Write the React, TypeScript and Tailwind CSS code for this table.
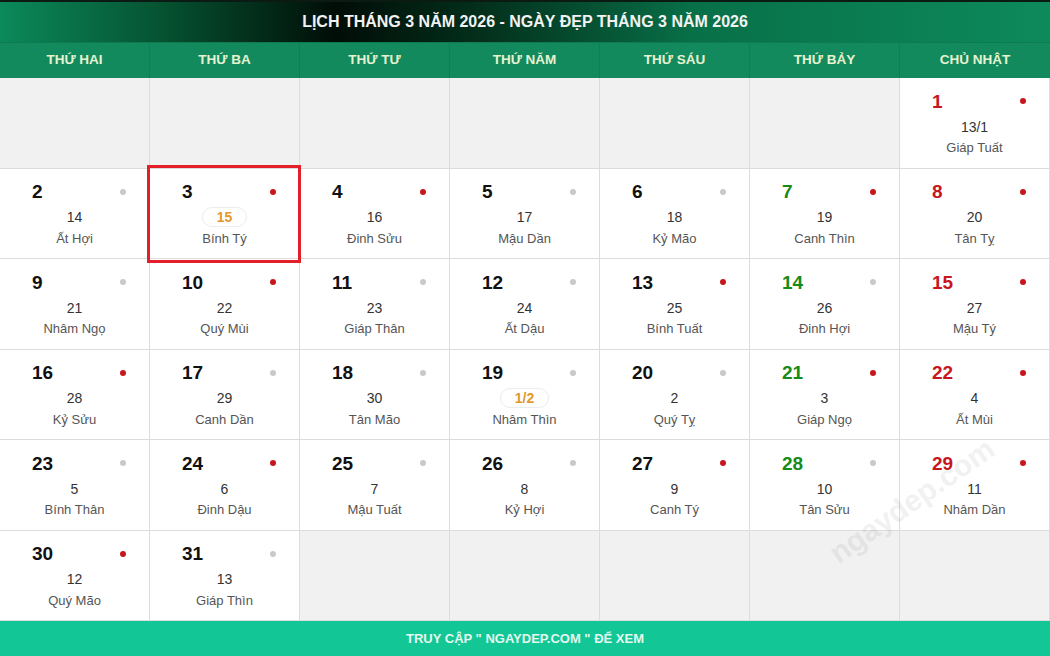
import React from 'react';

type Day = {
  day: number;
  lunar: string;
  canChi: string;
  good: boolean;
  badge?: boolean;
  boxed?: boolean;
};

const weekdays = ['THỨ HAI', 'THỨ BA', 'THỨ TƯ', 'THỨ NĂM', 'THỨ SÁU', 'THỨ BẢY', 'CHỦ NHẬT'];

const days: Day[] = [
  { day: 1, lunar: '13/1', canChi: 'Giáp Tuất', good: true },
  { day: 2, lunar: '14', canChi: 'Ất Hợi', good: false },
  { day: 3, lunar: '15', canChi: 'Bính Tý', good: true, badge: true, boxed: true },
  { day: 4, lunar: '16', canChi: 'Đinh Sửu', good: true },
  { day: 5, lunar: '17', canChi: 'Mậu Dần', good: false },
  { day: 6, lunar: '18', canChi: 'Kỷ Mão', good: false },
  { day: 7, lunar: '19', canChi: 'Canh Thìn', good: true },
  { day: 8, lunar: '20', canChi: 'Tân Tỵ', good: true },
  { day: 9, lunar: '21', canChi: 'Nhâm Ngọ', good: false },
  { day: 10, lunar: '22', canChi: 'Quý Mùi', good: true },
  { day: 11, lunar: '23', canChi: 'Giáp Thân', good: false },
  { day: 12, lunar: '24', canChi: 'Ất Dậu', good: false },
  { day: 13, lunar: '25', canChi: 'Bính Tuất', good: true },
  { day: 14, lunar: '26', canChi: 'Đinh Hợi', good: false },
  { day: 15, lunar: '27', canChi: 'Mậu Tý', good: true },
  { day: 16, lunar: '28', canChi: 'Kỷ Sửu', good: true },
  { day: 17, lunar: '29', canChi: 'Canh Dần', good: false },
  { day: 18, lunar: '30', canChi: 'Tân Mão', good: false },
  { day: 19, lunar: '1/2', canChi: 'Nhâm Thìn', good: false, badge: true },
  { day: 20, lunar: '2', canChi: 'Quý Tỵ', good: false },
  { day: 21, lunar: '3', canChi: 'Giáp Ngọ', good: true },
  { day: 22, lunar: '4', canChi: 'Ất Mùi', good: true },
  { day: 23, lunar: '5', canChi: 'Bính Thân', good: false },
  { day: 24, lunar: '6', canChi: 'Đinh Dậu', good: true },
  { day: 25, lunar: '7', canChi: 'Mậu Tuất', good: false },
  { day: 26, lunar: '8', canChi: 'Kỷ Hợi', good: false },
  { day: 27, lunar: '9', canChi: 'Canh Tý', good: true },
  { day: 28, lunar: '10', canChi: 'Tân Sửu', good: false },
  { day: 29, lunar: '11', canChi: 'Nhâm Dần', good: true },
  { day: 30, lunar: '12', canChi: 'Quý Mão', good: true },
  { day: 31, lunar: '13', canChi: 'Giáp Thìn', good: false },
];

// March 2026 starts on Sunday -> 6 empty cells before
const cells: (Day | null)[] = [
  ...Array(6).fill(null),
  ...days,
  ...Array(5).fill(null),
];

const DayCell: React.FC<{ item: Day | null; col: number }> = ({ item, col }) => {
  if (!item) {
    return <div className="bg-[#f1f1f1] border-r border-b border-[#dcdcdc]" />;
  }
  const numColor = col === 6 ? 'text-[#c8161d]' : col === 5 ? 'text-[#178a17]' : 'text-[#111]';
  return (
    <div className="relative bg-white border-r border-b border-[#dcdcdc] flex flex-col items-center pt-[12px]">
      <div className="w-full flex items-center justify-between pl-[32px] pr-[23px] h-[22px]">
        <span className={`text-[19px] font-bold leading-none ${numColor}`}>{item.day}</span>
        <span className={`w-[6px] h-[6px] rounded-full ${item.good ? 'bg-[#c8161d]' : 'bg-[#c9c9c9]'}`} />
      </div>
      {item.badge ? (
        <span className="mt-[4px] h-[20px] px-[14px] flex items-center rounded-full border border-[#ececec] text-[14px] font-bold text-[#e2982b] leading-none">
          {item.lunar}
        </span>
      ) : (
        <span className="mt-[5px] h-[19px] flex items-center text-[14px] text-[#333] leading-none">{item.lunar}</span>
      )}
      <span className="mt-[5px] text-[13px] text-[#555] leading-none">{item.canChi}</span>
      {item.boxed && (
        <div className="absolute z-10 -left-[3px] -top-[4px] w-[154px] h-[98px] border-[3px] border-[#e3202a] pointer-events-none" />
      )}
    </div>
  );
};

const App: React.FC = () => {
  return (
    <div className="w-[1050px] h-[656px] overflow-hidden bg-white font-['Liberation_Sans',Arial,sans-serif] flex flex-col relative">
      <div className="h-[42px] border-t-[2px] border-[#0b1a12] bg-[linear-gradient(90deg,#0b8a5b_0%,#05502f_16%,#010d07_32%,#03301c_46%,#087048_66%,#0d8a5c_100%)] flex items-center justify-center">
        <h1 className="text-[16px] font-bold text-[#f2f2f2]">
          LỊCH THÁNG 3 NĂM 2026 - NGÀY ĐẸP THÁNG 3 NĂM 2026
        </h1>
      </div>

      <div className="h-[36px] grid grid-cols-7 bg-[#128a5e] border-t border-[#0e7a52]">
        {weekdays.map((w, i) => (
          <div
            key={w}
            className={`flex items-center justify-center text-[13.5px] font-bold text-[#e6f3cf] ${i < 6 ? 'border-r border-[#0f7f55]' : ''}`}
          >
            {w}
          </div>
        ))}
      </div>

      <div className="flex-1 grid grid-cols-7 grid-rows-6">
        {cells.map((c, i) => (
          <DayCell key={i} item={c} col={i % 7} />
        ))}
      </div>

      <div className="h-[35px] bg-[#12c795] flex items-center justify-center">
        <span className="text-[13px] font-bold text-[#e4f8ef]">TRUY CẬP " NGAYDEP.COM " ĐỂ XEM</span>
      </div>

      <div className="absolute left-[815px] top-[478px] -rotate-[35deg] text-[30px] text-[#000] opacity-[0.05] font-bold pointer-events-none">
        ngaydep.com
      </div>
    </div>
  );
};

export default App;
